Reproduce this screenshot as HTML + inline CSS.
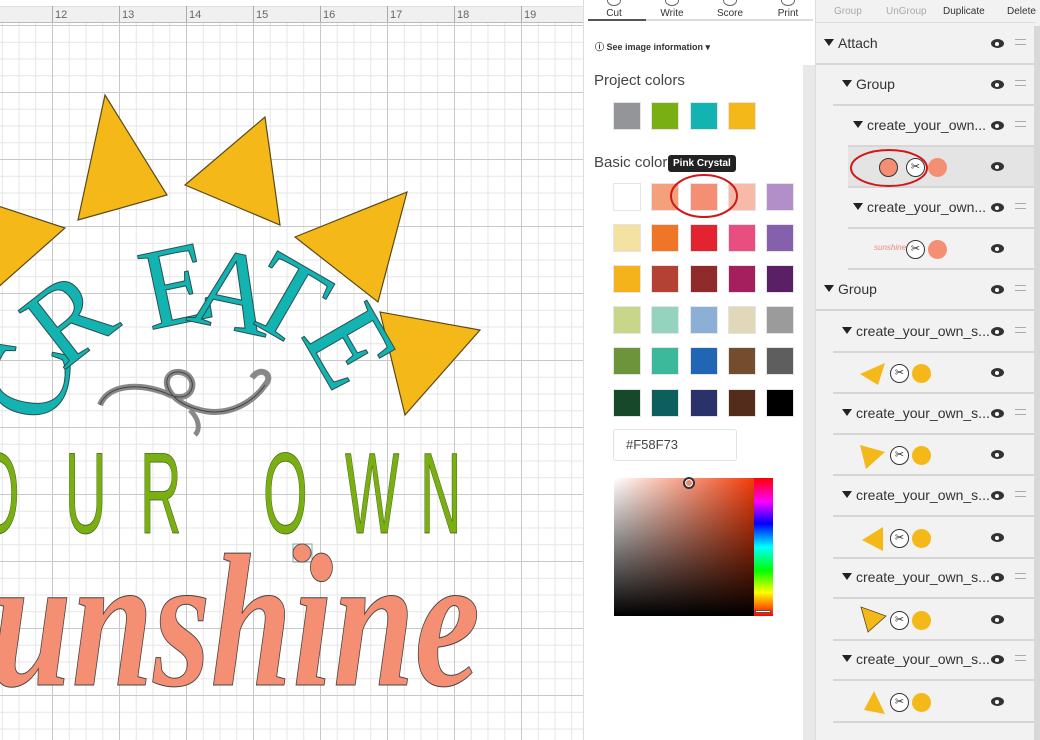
<!DOCTYPE html>
<html><head><meta charset="utf-8"><style>
*{margin:0;padding:0;box-sizing:border-box}
body{width:1040px;height:740px;overflow:hidden;position:relative;font-family:"Liberation Sans",sans-serif;background:#fff}
#canvas{position:absolute;left:0;top:0;width:583px;height:740px;background:#fff;overflow:hidden}
#grid{position:absolute;left:0;top:23px;width:583px;height:717px;
background-image:
linear-gradient(to right,#c8c8c8 1px,transparent 1px),
linear-gradient(to bottom,#c8c8c8 1px,transparent 1px),
linear-gradient(to right,#e6e6e6 1px,transparent 1px),
linear-gradient(to bottom,#e6e6e6 1px,transparent 1px);
background-size:67px 67px,67px 67px,16.75px 16.75px,16.75px 16.75px;
background-position:52px 2px,52px 2px,52px 2px,52px 2px}
#ruler{position:absolute;left:0;top:6px;width:583px;height:17px;background:#f0f0f0;border-bottom:1px solid #bbb;border-top:1px solid #e0e0e0}
#ruler span{position:absolute;top:2px;font-size:11px;color:#666}
#ruler i{position:absolute;bottom:0;width:1px;background:#aaa}
#mid{position:absolute;left:583px;top:0;width:232px;height:740px;background:#fff;border-left:1px solid #ddd}
.tab{position:absolute;top:8px;font-size:10px;color:#333;text-align:center;width:50px}
.ti{position:absolute;top:-13px;left:18px;width:14px;height:11px;border:1.2px solid #666;border-radius:50%}
.sw{position:absolute;width:28px;height:28px;border:1px solid #e5e5e5}
#right{position:absolute;left:815px;top:0;width:225px;height:740px;background:#f2f2f3;border-left:1px solid #ddd}
.row{position:absolute;height:41px;border-bottom:2px solid #d6d6d6;right:6px;font-size:14px;color:#333}
.row .t{position:absolute;top:11px}
.eye{position:absolute;right:30px;top:15px;width:13px;height:9px;border-radius:50%;background:#333}
.eye:after{content:"";position:absolute;left:4px;top:2.5px;width:4px;height:4px;border-radius:50%;background:#fff}
.eq{position:absolute;right:8px;top:15px;width:11px;height:6px;border-top:1.5px solid #aaa;border-bottom:1.5px solid #aaa}
.tri{display:inline-block;width:0;height:0;border-left:5px solid transparent;border-right:5px solid transparent;border-top:7px solid #222;margin-right:4px;vertical-align:2px}
.sc{position:absolute;width:19px;height:19px;border:1.5px solid #333;border-radius:50%;background:#fff;font-size:11px;text-align:center;line-height:16px;color:#222}
.dot{position:absolute;width:19px;height:19px;border-radius:50%}
</style></head><body>
<div id="canvas">
<div id="grid"></div>
<div id="ruler">
<span style="left:55px">12</span><span style="left:122px">13</span><span style="left:189px">14</span><span style="left:256px">15</span><span style="left:323px">16</span><span style="left:390px">17</span><span style="left:457px">18</span><span style="left:524px">19</span>
<i style="left:52px;height:16px"></i><i style="left:119px;height:16px"></i><i style="left:186px;height:16px"></i><i style="left:253px;height:16px"></i><i style="left:320px;height:16px"></i><i style="left:387px;height:16px"></i><i style="left:454px;height:16px"></i><i style="left:521px;height:16px"></i>
</div>
<svg width="583" height="740" style="position:absolute;left:0;top:0">
<g fill="#f5b819" stroke="#5a4a1a" stroke-width="1.2">
<polygon points="105,95 78,220 167,195"/>
<polygon points="265,117 185,185 280,225"/>
<polygon points="407,192 295,237 378,302"/>
<polygon points="380,312 405,415 480,330"/>
<polygon points="-5,205 65,228 -5,290"/>
</g>
<g fill="#12b3b0" stroke="#2a5050" stroke-width="1" font-family="Liberation Serif,serif" font-size="115">
<text transform="translate(60,425) rotate(-80)">C</text>
<text transform="translate(62,372) rotate(-38)">R</text>
<text transform="translate(150,330) rotate(-12)">E</text>
<text transform="translate(185,320) rotate(12)">A</text>
<text transform="translate(238,315) rotate(30)">T</text>
<text transform="translate(300,335) rotate(60)">E</text>
</g>
<path d="M100,405 C110,380 150,385 170,395 C195,405 200,375 180,372 C160,370 160,400 200,410 C230,418 255,400 265,385 C275,375 260,365 252,378" fill="none" stroke="#888" stroke-width="6"/>
<path d="M100,405 C110,380 150,385 170,395 C195,405 200,375 180,372 C160,370 160,400 200,410 C230,418 255,400 265,385" fill="none" stroke="#444" stroke-width="1"/>
<path d="M190,410 C200,420 200,430 195,435" fill="none" stroke="#888" stroke-width="5"/>
<g fill="#7aaf13" stroke="#3c5a10" stroke-width="0.8" font-family="Liberation Sans,sans-serif" font-size="115">
<text transform="translate(-25,533) scale(0.5,1)">O</text>
<text transform="translate(65,533) scale(0.5,1)">U</text>
<text transform="translate(140,533) scale(0.5,1)">R</text>
<text transform="translate(263,533) scale(0.5,1)">O</text>
<text transform="translate(345,533) scale(0.5,1)">W</text>
<text transform="translate(420,533) scale(0.5,1)">N</text>
</g>
<rect x="293" y="544" width="19" height="18" fill="none" stroke="#8aa" stroke-width="1"/>
<circle cx="302" cy="553" r="9" fill="#f58f73" stroke="#555"/>
<text x="-10" y="685" font-family="Liberation Serif,serif" font-style="italic" font-weight="bold" font-size="190" fill="#f58f73" stroke="#444" stroke-width="1" textLength="490" lengthAdjust="spacingAndGlyphs">unshine</text>
</svg>
</div>

<div id="mid">
<div class="tab" style="left:5px"><i class="ti"></i>Cut</div><div class="tab" style="left:63px"><i class="ti"></i>Write</div><div class="tab" style="left:121px"><i class="ti"></i>Score</div><div class="tab" style="left:179px"><i class="ti"></i>Print</div>
<div style="position:absolute;left:4px;top:19px;width:225px;height:2px;background:#ddd"></div>
<div style="position:absolute;left:4px;top:19px;width:58px;height:2px;background:#555"></div>
<div style="position:absolute;left:11px;top:40px;font-size:9px;font-weight:bold;color:#333">ⓘ See image information ▾</div>
<div style="position:absolute;left:219px;top:65px;width:13px;height:675px;background:#e8e8e8"></div>
<div style="position:absolute;left:10px;top:72px;font-size:15px;color:#444">Project colors</div>
<div class="sw" style="left:29px;top:102px;background:#939598"></div>
<div class="sw" style="left:67px;top:102px;background:#7aaf13"></div>
<div class="sw" style="left:106px;top:102px;background:#12b3b0"></div>
<div class="sw" style="left:144px;top:102px;background:#f5b819"></div>
<div style="position:absolute;left:10px;top:154px;font-size:15px;color:#444">Basic color</div>
<div style="position:absolute;left:84px;top:155px;background:#222;color:#fff;font-size:10px;font-weight:bold;padding:3px 5px;border-radius:3px;z-index:3">Pink Crystal</div>
<div id="bc"></div>
<div style="position:absolute;left:29px;top:429px;width:124px;height:32px;border:1px solid #e3e3e3;border-radius:3px;font-size:13px;color:#444;padding:7px 0 0 12px">#F58F73</div>
<div style="position:absolute;left:30px;top:478px;width:140px;height:138px;background:linear-gradient(to top,#000,rgba(0,0,0,0)),linear-gradient(to right,#fff,#f23d0a)"></div>
<div style="position:absolute;left:99px;top:477px;width:12px;height:12px;border:2px solid #333;border-radius:50%;background:#e98a72;box-shadow:0 0 0 1px #fff inset"></div>
<div style="position:absolute;left:170px;top:478px;width:19px;height:138px;background:linear-gradient(to bottom,#f00,#f0f 17%,#00f 33%,#0ff 50%,#0f0 67%,#ff0 83%,#f00)"></div>
<div style="position:absolute;left:171px;top:610px;width:16px;height:3px;background:#fff;border:1px solid #555"></div>
<svg width="232" height="260" style="position:absolute;left:0;top:0;z-index:4"><ellipse cx="120" cy="196" rx="33" ry="21" fill="none" stroke="#d01818" stroke-width="2"/></svg>
</div>

<div id="right">
<div style="position:absolute;left:0;top:0;width:225px;height:22px;font-size:10px">
<span style="position:absolute;left:18px;top:6px;color:#aaa">Group</span>
<span style="position:absolute;left:70px;top:6px;color:#aaa">UnGroup</span>
<span style="position:absolute;left:127px;top:6px;color:#333">Duplicate</span>
<span style="position:absolute;left:191px;top:6px;color:#333">Delete</span>
</div>
<div style="position:absolute;right:0;top:26px;width:6px;height:714px;background:#d8d8d8"></div>
<div style="position:absolute;left:0;top:22px;width:220px;height:1px;background:#ddd"></div>

<div class="row" style="left:0;top:24px"><span class="t" style="left:8px"><span class="tri"></span>Attach</span><i class="eye"></i><i class="eq"></i></div>
<div class="row" style="left:17px;top:65px"><span class="t" style="left:9px"><span class="tri"></span>Group</span><i class="eye"></i><i class="eq"></i></div>
<div class="row" style="left:32px;top:106px"><span class="t" style="left:5px"><span class="tri"></span>create_your_own...</span><i class="eye"></i><i class="eq"></i></div>
<div class="row" style="left:32px;top:147px;background:#e4e4e4"><div class="dot" style="left:31px;top:11px;background:#f58f73;border:1.5px solid #333"></div><div class="sc" style="left:58px;top:11px">✂</div><div class="dot" style="left:80px;top:11px;background:#f58f73"></div><i class="eye"></i></div>
<div class="row" style="left:32px;top:188px"><span class="t" style="left:5px"><span class="tri"></span>create_your_own...</span><i class="eye"></i><i class="eq"></i></div>
<div class="row" style="left:32px;top:229px"><span style="position:absolute;left:26px;top:14px;font-size:8px;color:#e87;font-style:italic">sunshine</span><div class="sc" style="left:58px;top:11px">✂</div><div class="dot" style="left:80px;top:11px;background:#f58f73"></div><i class="eye"></i></div>
<div class="row" style="left:0;top:270px"><span class="t" style="left:8px"><span class="tri"></span>Group</span><i class="eye"></i><i class="eq"></i></div>

<div class="row" style="left:17px;top:312px"><span class="t" style="left:9px"><span class="tri"></span>create_your_own_s...</span><i class="eye"></i><i class="eq"></i></div>
<div class="row" style="left:17px;top:353px"><svg style="position:absolute;left:26px;top:9px" width="28" height="24"><polygon points="1,12 26,1 19,23" fill="#f5b819"/></svg><div class="sc" style="left:57px;top:11px">✂</div><div class="dot" style="left:79px;top:11px;background:#f5b819"></div><i class="eye"></i></div>
<div class="row" style="left:17px;top:394px"><span class="t" style="left:9px"><span class="tri"></span>create_your_own_s...</span><i class="eye"></i><i class="eq"></i></div>
<div class="row" style="left:17px;top:435px"><svg style="position:absolute;left:26px;top:9px" width="28" height="26"><polygon points="1,1 26,8 7,25" fill="#f5b819"/></svg><div class="sc" style="left:57px;top:11px">✂</div><div class="dot" style="left:79px;top:11px;background:#f5b819"></div><i class="eye"></i></div>
<div class="row" style="left:17px;top:476px"><span class="t" style="left:9px"><span class="tri"></span>create_your_own_s...</span><i class="eye"></i><i class="eq"></i></div>
<div class="row" style="left:17px;top:518px"><svg style="position:absolute;left:28px;top:8px" width="28" height="26"><polygon points="1,14 22,1 22,25" fill="#f5b819"/></svg><div class="sc" style="left:57px;top:11px">✂</div><div class="dot" style="left:79px;top:11px;background:#f5b819"></div><i class="eye"></i></div>
<div class="row" style="left:17px;top:558px"><span class="t" style="left:9px"><span class="tri"></span>create_your_own_s...</span><i class="eye"></i><i class="eq"></i></div>
<div class="row" style="left:17px;top:600px"><svg style="position:absolute;left:27px;top:6px" width="28" height="28"><polygon points="1,1 26,10 8,26" fill="#f5b819" stroke="#5a4a1a" stroke-width="0.8"/></svg><div class="sc" style="left:57px;top:11px">✂</div><div class="dot" style="left:79px;top:11px;background:#f5b819"></div><i class="eye"></i></div>
<div class="row" style="left:17px;top:640px"><span class="t" style="left:9px"><span class="tri"></span>create_your_own_s...</span><i class="eye"></i><i class="eq"></i></div>
<div class="row" style="left:17px;top:682px"><svg style="position:absolute;left:30px;top:8px" width="24" height="26"><polygon points="11,1 22,24 1,20" fill="#f5b819"/></svg><div class="sc" style="left:57px;top:11px">✂</div><div class="dot" style="left:79px;top:11px;background:#f5b819"></div><i class="eye"></i></div>
<svg width="225" height="200" style="position:absolute;left:0;top:0"><ellipse cx="73" cy="168" rx="38" ry="18" fill="none" stroke="#d01818" stroke-width="2"/></svg>
</div>
<script>
var c=[["#ffffff","#f4a07a","#f58f73","#f7b9a8","#b38fc9"],["#f3e2a2","#ee7626","#e1242f","#e84f80","#8561ad"],["#f4b31b","#b34134","#8f2b2b","#a51e5e","#5a1f64"],["#c8d68a","#95d3bf","#8cafd8","#e0d8b8","#9b9b9b"],["#6e943b","#3bb99a","#2165b5","#744d2e","#5e5e5e"],["#17482a","#0d5f5e","#2a316b","#532c1b","#000000"]];
var xs=[29,67,106,144,182],ys=[183,224,265,306,347,389],h="";
for(var r=0;r<6;r++)for(var k=0;k<5;k++)h+='<div class="sw" style="left:'+xs[k]+'px;top:'+ys[r]+'px;background:'+c[r][k]+'"></div>';
document.getElementById("bc").innerHTML=h;
</script>
</body></html>
